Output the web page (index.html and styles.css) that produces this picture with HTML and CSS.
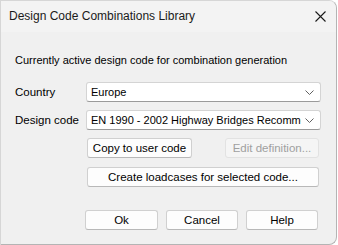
FILE: index.html
```html
<!DOCTYPE html>
<html lang="en">
<head>
  <meta charset="UTF-8">
  <title>Design Code Combinations Library</title>
  <link rel="stylesheet" href="styles.css">
</head>
<body>
  <div class="dialog">
    <div class="titlebar">
      <span class="title">Design Code Combinations Library</span>
      <svg class="close" width="11" height="11" viewBox="0 0 11 11">
        <path d="M0.5 0.5 L10.5 10.5 M10.5 0.5 L0.5 10.5" stroke="#1a1a1a" stroke-width="1.1" fill="none"/>
      </svg>
    </div>
    <div class="content">
      <div class="intro">Currently active design code for combination generation</div>

      <div class="row">
        <span class="label">Country</span>
        <div class="combo">
          <span class="value">Europe</span>
          <svg class="chevron" width="9" height="5" viewBox="0 0 9 5"><path d="M0.5 0.5 L4.5 4.5 L8.5 0.5" stroke="#606060" fill="none"/></svg>
        </div>
      </div>

      <div class="row">
        <span class="label">Design code</span>
        <div class="combo">
          <span class="value">EN 1990 - 2002 Highway Bridges Recommended</span>
          <svg class="chevron" width="9" height="5" viewBox="0 0 9 5"><path d="M0.5 0.5 L4.5 4.5 L8.5 0.5" stroke="#606060" fill="none"/></svg>
        </div>
      </div>

      <div class="actions">
        <div class="pair">
          <button class="btn copy">Copy to user code</button>
          <button class="btn edit" disabled>Edit definition...</button>
        </div>
        <button class="btn create">Create loadcases for selected code...</button>
      </div>

      <div class="footer">
        <button class="btn foot ok">Ok</button>
        <button class="btn foot">Cancel</button>
        <button class="btn foot">Help</button>
      </div>
    </div>
  </div>
</body>
</html>
```

FILE: styles.css
```css
body {
  margin: 0;
  background: #ffffff;
  font-family: "Liberation Sans", Arial, sans-serif;
  font-size: 11.5px;
  color: #000;
}

.dialog {
  width: 335px;
  height: 243px;
  background: #f0f0f0;
  border: 1px solid #b4b4b4;
  border-left-color: #d6d6d6;
  border-top-color: #d6d6d6;
  border-radius: 0 8px 8px 0;
  overflow: hidden;
}

.titlebar {
  height: 31px;
  background: #f3f3f3;
  display: flex;
  align-items: center;
  padding: 0 10px 0 8px;
}

.title {
  flex: 1;
  font-size: 12px;
  color: #1a1a1a;
  margin-top: -1px;
}

.close {
  margin-top: -1px;
}

.content {
  padding: 21px 0 0 14px;
}

.intro {
  font-size: 11px;
  height: 15px;
  line-height: 15px;
  margin-bottom: 14px;
}

.row {
  display: flex;
  align-items: center;
  margin-bottom: 8px;
}

.label {
  width: 71px;
}

.combo {
  box-sizing: border-box;
  width: 235px;
  height: 20px;
  background: #fff;
  border: 1px solid #d4d4d4;
  border-bottom-color: #9a9a9a;
  border-radius: 3px;
  display: flex;
  align-items: center;
  padding: 0 6px 0 4px;
}

.value {
  flex: 1;
  font-size: 11px;
  white-space: nowrap;
  overflow: hidden;
}

.chevron {
  margin-left: 4px;
}

.actions {
  margin-left: 72px;
  width: 232px;
}

.pair {
  display: flex;
  justify-content: space-between;
  margin-bottom: 9px;
}

.btn {
  box-sizing: border-box;
  height: 20px;
  background: #fdfdfd;
  border: 1px solid #d0d0d0;
  border-bottom-color: #b8b8b8;
  border-radius: 3px;
  font-family: inherit;
  font-size: 11.5px;
  color: #000;
  padding: 0;
}

.copy {
  width: 105px;
}

.edit {
  width: 94px;
  background: #f5f5f5;
  border-color: #e2e2e2;
  color: #a0a0a0;
}

.create {
  width: 232px;
}

.footer {
  display: flex;
  gap: 8px;
  margin: 23px 0 0 70px;
}

.foot {
  width: 72px;
}

.ok {
  width: 73px;
}
```
